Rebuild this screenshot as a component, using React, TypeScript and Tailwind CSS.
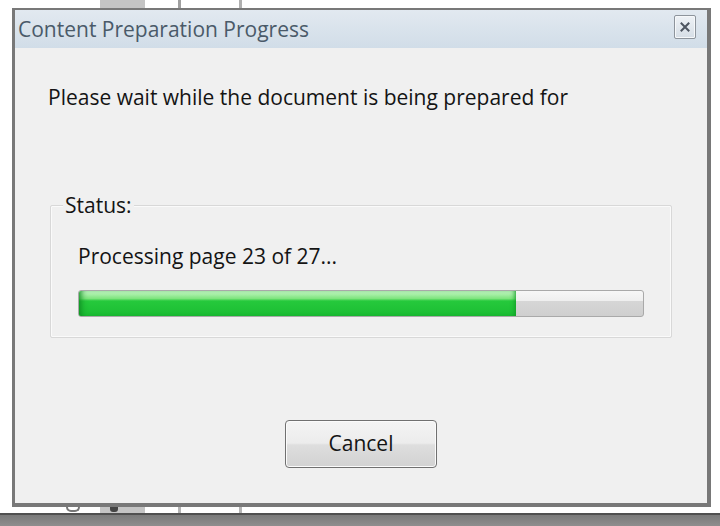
import React from "react";

const ui = "font-['Open_Sans','Noto_Sans','Liberation_Sans',sans-serif]";

function CloseButton() {
  return (
    <button className="w-[22px] h-[24px] mt-[-4px] rounded-[2px] border border-[#8d949c] bg-[linear-gradient(to_bottom,#eef2f6,#d6dee6)] shadow-[inset_0_0_0_1px_#f6f8fa] flex items-center justify-center">
      <svg width="10" height="10" viewBox="0 0 10 10">
        <path d="M1.5 1.5 L8.5 8.5 M8.5 1.5 L1.5 8.5" stroke="#4d5560" strokeWidth="2" strokeLinecap="square" />
      </svg>
    </button>
  );
}

function ProgressBar({ value }: { value: number }) {
  return (
    <div className="h-[27px] rounded-[3px] border border-[#a9a9a9] bg-[linear-gradient(to_bottom,#f7f7f7_0%,#efefef_38%,#d6d6d6_42%,#cfcfcf_100%)] overflow-hidden flex">
      <div
        className="h-full bg-[linear-gradient(to_bottom,#c8f7c8_0%,#7ee47e_30%,#26c93c_40%,#1bbd33_100%)] shadow-[inset_6px_0_6px_-4px_#0e8a20,inset_-4px_0_5px_-3px_#109a26]"
        style={{ width: `${value}%` }}
      />
    </div>
  );
}

export default function App() {
  const page = 23;
  const total = 27;

  return (
    <div className={`w-[720px] h-[526px] bg-white overflow-hidden flex flex-col ${ui}`}>
      {/* desktop strip above the dialog */}
      <div className="h-[8px] flex shrink-0">
        <div className="ml-[100px] w-[45px] bg-[#c4c4c4]" />
        <div className="ml-[33px] w-[3px] bg-[#a0a0a0]" />
        <div className="ml-[58px] w-[3px] bg-[#b0b0b0]" />
      </div>

      {/* dialog window */}
      <div className="ml-[12px] w-[699px] h-[499px] shrink-0 border-t-[2px] border-l-[3px] border-r-[4px] border-b-[4px] border-[#787878] flex flex-col">
        <div className="h-[38px] shrink-0 bg-[linear-gradient(to_bottom,#e2e9f0,#d1dde8)] flex items-center justify-between pl-[3px] pr-[11px]">
          <span className="text-[21px] text-[#4a5a69] leading-none">Content Preparation Progress</span>
          <CloseButton />
        </div>

        <div className="flex-1 bg-[#f0f0f0] flex flex-col">
          <p className="mt-[36px] ml-[33px] text-[21px] leading-[26px] text-[#141414]">
            Please wait while the document is being prepared for
          </p>

          {/* status group box */}
          <div className="relative mt-[95px] ml-[35px] w-[622px] h-[133px] border border-[#d8d8d8] shadow-[inset_0_0_0_1px_#fafafa] rounded-[2px] px-[27px]">
            <span className="absolute left-[12px] top-[-14px] px-[2px] bg-[#f0f0f0] text-[21px] leading-[26px] text-[#141414]">
              Status:
            </span>
            <div className="mt-[37px] text-[21px] leading-[26px] text-[#141414]">
              Processing page {page} of {total}...
            </div>
            <div className="mt-[21px]">
              <ProgressBar value={77.5} />
            </div>
          </div>

          <div className="mt-[82px] flex justify-center">
            <button className="w-[152px] h-[48px] rounded-[4px] border border-[#707070] bg-[linear-gradient(to_bottom,#f4f4f4_0%,#ececec_48%,#dedede_52%,#d2d2d2_100%)] shadow-[inset_0_0_0_1px_#fbfbfb] text-[21px] text-[#141414]">
              Cancel
            </button>
          </div>
        </div>
      </div>

      {/* desktop strip below the dialog */}
      <div className="h-[6px] flex shrink-0">
        <div className="ml-[66px] w-[14px] h-[5px] rounded-b-full border-2 border-t-0 border-[#777]" />
        <div className="ml-[20px] w-[45px] bg-[#c4c4c4] flex justify-start">
          <div className="ml-[10px] w-[8px] h-[5px] bg-[#444] rounded-b-[3px]" />
        </div>
        <div className="ml-[33px] w-[3px] bg-[#b5b5b5]" />
        <div className="ml-[58px] w-[3px] bg-[#b5b5b5]" />
      </div>

      {/* taskbar edge */}
      <div className="flex-1 border-t-[2px] border-[#505050] bg-[linear-gradient(to_bottom,#7a7a7a,#8e8e8e)]" />
    </div>
  );
}
